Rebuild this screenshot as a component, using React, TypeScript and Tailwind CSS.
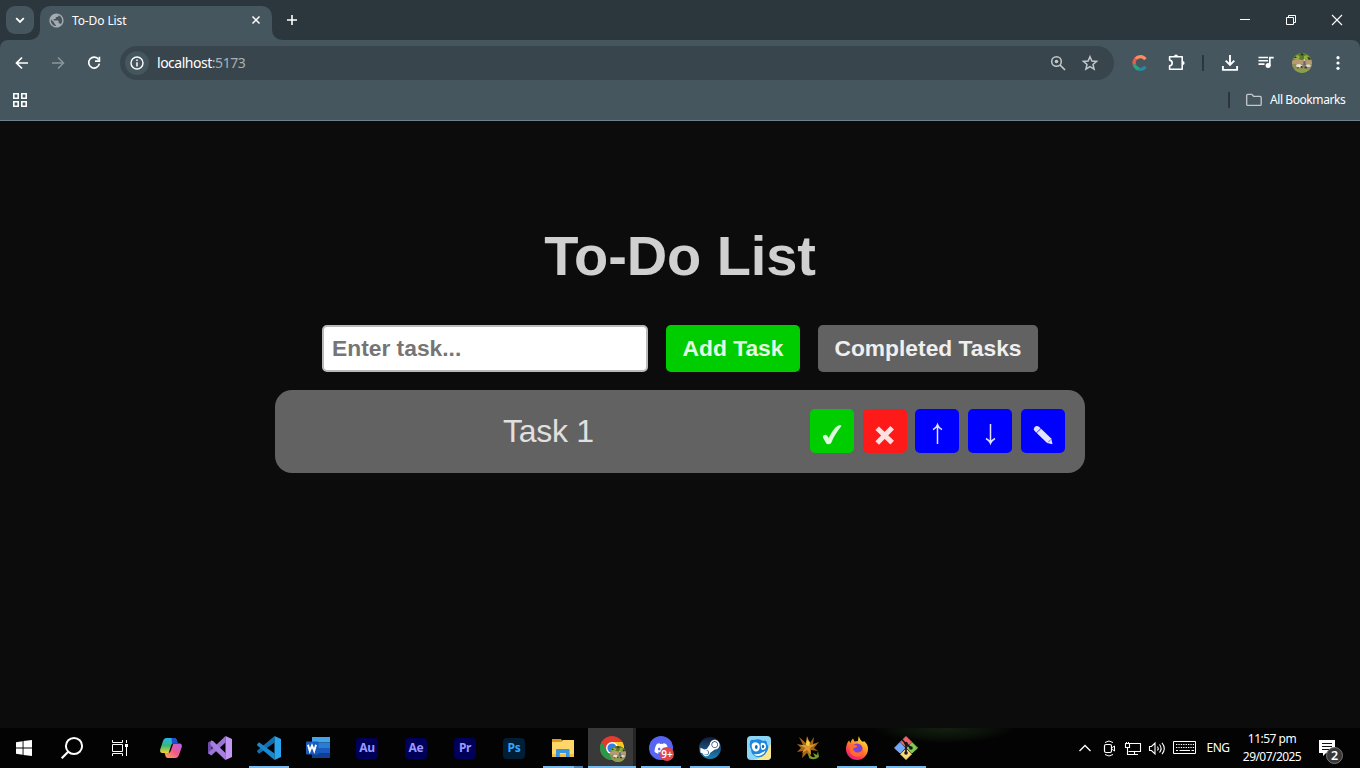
import type { ReactNode } from "react";
import { MdPublic } from "react-icons/md";
import { FaDiscord, FaSteamSymbol } from "react-icons/fa";

type IconProps = { size?: number; children: ReactNode };

function Icon({ size = 24, children }: IconProps) {
  return (
    <svg width={size} height={size} viewBox={`0 0 ${size} ${size}`} fill="none" className="shrink-0">
      {children}
    </svg>
  );
}

function Cell({ children }: { children: ReactNode }) {
  return <div className="flex h-full w-9 shrink-0 items-center justify-center">{children}</div>;
}

function TabStrip() {
  return (
    <div className="flex h-10 items-start bg-[#2c373d] text-white">
      <button className="mt-1.5 ml-1.5 flex size-7 items-center justify-center rounded-[9px] bg-[#45565f]">
        <Icon size={14}>
          <path d="M3.2 5.2 L7 9 L10.8 5.2" stroke="#fff" strokeWidth="1.8" />
        </Icon>
      </button>
      <svg width="10" height="10" className="mt-[30px] -ml-1 shrink-0">
        <path d="M10 0 V10 H0 A10 10 0 0 0 10 0Z" fill="#45565f" />
      </svg>
      <div className="mt-1.5 flex h-[34px] w-[232px] items-center rounded-t-[10px] bg-[#45565f] pr-2.5 pb-1.5 pl-2">
        <MdPublic size={17} color="#a5abb0" />
        <span className="ml-[7px] flex-1 pt-px font-['Noto_Sans','Open_Sans',sans-serif] text-[12px] tracking-[-0.12px]">
          To-Do List
        </span>
        <Icon size={12}>
          <path d="M2.5 2.5 L9.5 9.5 M9.5 2.5 L2.5 9.5" stroke="#fff" strokeWidth="1.5" />
        </Icon>
      </div>
      <svg width="10" height="10" className="mt-[30px] shrink-0">
        <path d="M0 0 V10 H10 A10 10 0 0 1 0 0Z" fill="#45565f" />
      </svg>
      <div className="mt-3.5 ml-1">
        <Icon size={12}>
          <path d="M6 1 V11 M1 6 H11" stroke="#fff" strokeWidth="1.6" />
        </Icon>
      </div>
      <div className="ml-auto flex h-10">
        <div className="flex w-[46px] items-center justify-center">
          <Icon size={12}>
            <path d="M1 5.5 H11" stroke="#fff" />
          </Icon>
        </div>
        <div className="flex w-[46px] items-center justify-center">
          <Icon size={12}>
            <path d="M1.5 3.5 H8.5 V10.5 H1.5 Z M3.5 3.5 V1.5 H10.5 V8.5 H8.5" stroke="#fff" />
          </Icon>
        </div>
        <div className="flex w-[46px] items-center justify-center">
          <Icon size={12}>
            <path d="M1 1 L11 11 M11 1 L1 11" stroke="#fff" strokeWidth="1.1" />
          </Icon>
        </div>
      </div>
    </div>
  );
}

function Photo({ size }: { size: number }) {
  return (
    <svg width={size} height={size} viewBox="0 0 20 20" className="shrink-0 rounded-full">
      <rect width="20" height="20" fill="#8d9a5c" />
      <rect width="20" height="7" fill="#5d7a2c" />
      <path d="M1 6 L3 3 L6 2 L8 4 L6 7Z M12 3 L15 2 L18 5 L16 7 L12 6Z" fill="#93ae45" />
      <path d="M8 0 L12 1 L10 3Z M15 4 L19 5 L17 7Z M3 3 L5 5 L2 5Z" fill="#243a12" />
      <path d="M0 7.5 L6 6 L12 7.5 L20 7 V11 H0Z" fill="#b99a70" />
      <path d="M0 11 H20 V16 H0Z" fill="#948a5e" />
      <path d="M4 12 Q6 10.2 9 11.5 L10.5 13 L8 14.5 L4.5 13.8Z" fill="#e9e1d4" />
      <path d="M13.5 12 Q16 10.5 19 12 L18 14 L14 14Z" fill="#ded5cb" />
      <path d="M11.4 7.6 H13.3 L14 12.5 H11.4Z" fill="#566e8c" />
      <circle cx="12.3" cy="6.9" r="1" fill="#e5c6b0" />
      <path d="M5.5 14 H6.5 V16 H5.5Z M12.5 13.5 H15 V15.5 H12.5Z M8.8 13 H10.5 V15 H8.8Z" fill="#4b3a2c" />
      <path d="M0 16 Q10 14.8 20 16 V20 H0Z" fill="#8aa048" />
    </svg>
  );
}

function Toolbar() {
  return (
    <div className="bg-[#2c373d]">
      <div className="h-[81px] rounded-t-lg border-b border-[#71808a] bg-[#45565f] text-white">
        <div className="flex h-11 items-center px-1 pt-0.5">
          <Cell>
            <Icon size={18}>
              <path d="M15 9 H4 M9 3.5 L3.5 9 L9 14.5" stroke="#fff" strokeWidth="1.7" />
            </Icon>
          </Cell>
          <Cell>
            <Icon size={18}>
              <path d="M3 9 H14 M9 3.5 L14.5 9 L9 14.5" stroke="#8b969c" strokeWidth="1.5" />
            </Icon>
          </Cell>
          <Cell>
            <Icon size={18}>
              <path d="M13.6 5.6 A5.4 5.4 0 1 0 14.4 9.7" stroke="#fff" strokeWidth="1.7" />
              <path d="M14.4 2.8 V7.2 H10" stroke="#fff" strokeWidth="1.7" />
            </Icon>
          </Cell>
          <div className="ml-2 flex h-[34px] flex-1 items-center rounded-full bg-[#39454c] pr-[15px] pl-[5px]">
            <div className="flex size-6 items-center justify-center rounded-full bg-[#45565f]">
              <Icon size={16}>
                <circle cx="8" cy="8" r="6" stroke="#fff" strokeWidth="1.4" />
                <path d="M8 7.2 V11.4 M8 4.6 V6.1" stroke="#fff" strokeWidth="1.5" />
              </Icon>
            </div>
            <span className="ml-2 flex-1 pb-px font-['Noto_Sans','Open_Sans',sans-serif] text-[14px] tracking-[-0.48px]">
              localhost<span className="text-[#a9b0b5]">:5173</span>
            </span>
            <Icon size={18}>
              <circle cx="7.5" cy="7.5" r="4.8" stroke="#c3c8cb" strokeWidth="1.5" />
              <circle cx="7.5" cy="7.5" r="1.8" fill="#c3c8cb" />
              <path d="M11 11 L16 16" stroke="#c3c8cb" strokeWidth="1.7" />
            </Icon>
            <svg width="18" height="18" viewBox="0 0 18 18" fill="none" className="ml-[14px]">
              <path
                d="M9 2.7 L10.9 7 L15.6 7.4 L12 10.5 L13.1 15.1 L9 12.7 L4.9 15.1 L6 10.5 L2.4 7.4 L7.1 7Z"
                stroke="#c3c8cb"
                strokeWidth="1.5"
              />
            </svg>
          </div>
          <div className="w-2" />
          <Cell>
            <Icon size={18}>
              <path d="M14.4 5.2 A6.2 6.2 0 0 0 4.6 4.8" stroke="#ff8b5e" strokeWidth="3.2" />
              <path d="M4.6 4.8 A6.2 6.2 0 0 0 3.3 10.5" stroke="#ef5a4a" strokeWidth="3.2" />
              <path d="M3.3 10.5 A6.2 6.2 0 0 0 8 15.1" stroke="#27a581" strokeWidth="3.2" />
              <path d="M8 15.1 A6.2 6.2 0 0 0 14.4 12.8" stroke="#238ba6" strokeWidth="3.2" />
            </Icon>
          </Cell>
          <Cell>
            <Icon size={18}>
              <path
                d="M2.6 2.8 H15.2 V15.2 H2.6 V11.9 Q5.2 11.4 5.2 9 Q5.2 6.6 2.6 6.1Z"
                stroke="#fff"
                strokeWidth="1.6"
                strokeLinejoin="round"
              />
              <path d="M7 2.4 A2 2 0 0 1 11 2.4Z M15.6 7 A2 2 0 0 1 15.6 11Z" fill="#fff" />
            </Icon>
          </Cell>
          <div className="flex w-[18px] justify-center">
            <div className="h-4 w-0.5 bg-[#2c373d]" />
          </div>
          <Cell>
            <Icon size={18}>
              <path d="M9 1 V10.5 M4.7 6.7 L9 11 L13.3 6.7" stroke="#fff" strokeWidth="1.9" />
              <path d="M1.9 12 V15.9 H16.1 V12" stroke="#fff" strokeWidth="1.9" strokeLinejoin="round" />
            </Icon>
          </Cell>
          <Cell>
            <Icon size={18}>
              <path d="M1.5 3.5 H11 M1.5 6.8 H11 M1.5 10.1 H7.5" stroke="#fff" strokeWidth="1.6" />
              <circle cx="11.1" cy="11.6" r="2.5" fill="#fff" />
              <path d="M12.8 12 V3.6 H16.7" stroke="#fff" strokeWidth="1.7" />
            </Icon>
          </Cell>
          <Cell>
            <Photo size={20} />
          </Cell>
          <Cell>
            <Icon size={18}>
              <circle cx="9" cy="3.7" r="1.6" fill="#fff" />
              <circle cx="9" cy="9" r="1.6" fill="#fff" />
              <circle cx="9" cy="14.3" r="1.6" fill="#fff" />
            </Icon>
          </Cell>
        </div>
        <div className="flex h-8 items-center pr-[14px] pl-3">
          <Icon size={16}>
            <path
              d="M1.8 1.8 H6.2 V6.2 H1.8Z M9.8 1.8 H14.2 V6.2 H9.8Z M1.8 9.8 H6.2 V14.2 H1.8Z M9.8 9.8 H14.2 V14.2 H9.8Z"
              stroke="#fff"
              strokeWidth="1.6"
            />
          </Icon>
          <div className="ml-auto h-4 w-0.5 bg-[#2c373d]" />
          <svg width="18" height="16" viewBox="0 0 18 16" fill="none" className="ml-[15px]">
            <path
              d="M1.7 3.4 Q1.7 2.4 2.7 2.4 H6.8 L8.6 4.3 H15.2 Q16.2 4.3 16.2 5.3 V12.4 Q16.2 13.4 15.2 13.4 H2.7 Q1.7 13.4 1.7 12.4Z"
              stroke="#c3c8cb"
              strokeWidth="1.3"
            />
          </svg>
          <span className="ml-[7px] w-[76px] font-['Noto_Sans','Open_Sans',sans-serif] text-[12px] tracking-[-0.42px] whitespace-nowrap">
            All Bookmarks
          </span>
        </div>
      </div>
    </div>
  );
}

function ActionButton({ color, children }: { color: string; children: ReactNode }) {
  return (
    <button className={`flex size-11 items-center justify-center rounded-[5px] ${color}`}>
      <Icon size={44}>{children}</Icon>
    </button>
  );
}

function TodoPage() {
  return (
    <main className="flex h-[607px] flex-col items-center bg-[#0c0c0c] pt-[103px] font-['Liberation_Sans',Arial,sans-serif]">
      <h1 className="text-[56px] leading-[64px] font-bold tracking-[-0.1px] text-[#d0d0d0]">To-Do List</h1>
      <div className="mt-[37px] flex gap-[18px] text-[22.8px] font-bold">
        <input
          className="h-[47px] w-[326px] rounded-[5px] border-2 border-[#bababa] bg-white px-2 placeholder:text-[#757575]"
          placeholder="Enter task..."
        />
        <button className="h-[47px] w-[134px] rounded-[5px] bg-[#00cd00] whitespace-nowrap text-[#e5fae5]">
          Add Task
        </button>
        <button className="h-[47px] w-[220px] rounded-[5px] bg-[#626262] whitespace-nowrap text-[#efefef]">
          Completed Tasks
        </button>
      </div>
      <div className="mt-[18px] flex h-[83px] w-[810px] items-start rounded-[17px] bg-[#626262] px-5 pt-[19px]">
        <span className="mr-2 flex-1 pt-0.5 text-center text-[32px] leading-10 tracking-[-0.3px] text-[#e0e0e0]">
          Task 1
        </span>
        <div className="flex gap-[8.8px]">
          <ActionButton color="bg-[#00cd00]">
            <path
              d="M12.9 28.6 C12.3 26.6 15.6 24.8 17 26.6 L18.8 29 C21.3 23.6 24.6 18.2 28 16.7 C29.4 16 32.2 16.2 31.2 17.3 C27.4 22 23.8 27.5 21.4 33.6 C20.8 35.4 17.2 35.8 16.2 34.2 Z"
              fill="#ddfadd"
            />
          </ActionButton>
          <ActionButton color="bg-[#ff1a1a]">
            <path d="M14.2 19.2 L29.2 33.6 M29.2 18.8 L14.2 34" stroke="#ffdfdf" strokeWidth="5" />
          </ActionButton>
          <ActionButton color="bg-[#0000ff]">
            <path d="M22.5 35 V16.5 M18 20.6 Q21.4 19 22.5 15.8 Q23.6 19 27 20.6" stroke="#e2e2ff" strokeWidth="1.5" />
          </ActionButton>
          <ActionButton color="bg-[#0000ff]">
            <path d="M22.5 15 V33.5 M18 29.5 Q21.4 31.2 22.5 34.3 Q23.6 31.2 27 29.5" stroke="#e2e2ff" strokeWidth="1.5" />
          </ActionButton>
          <ActionButton color="bg-[#0000ff]">
            <path d="M13.3 18.5 Q15.5 16 18 17.8 L19.7 19.3 L15.3 23.7 L13.5 21.8 Q12 20.2 13.3 18.5Z" fill="#e2e2ff" />
            <path d="M15.7 24.1 L20.1 19.7 L30.3 29.5 L31.5 35.2 L26.1 33.9Z" fill="#e2e2ff" />
            <path d="M27 33.4 L30 30.4" stroke="#3030ff" strokeWidth="0.7" />
          </ActionButton>
        </div>
      </div>
    </main>
  );
}

type TaskItemProps = { children: ReactNode; open?: boolean; active?: boolean; stacked?: boolean };

function TaskItem({ children, open, active, stacked }: TaskItemProps) {
  return (
    <div className={`mr-px flex h-10 w-12 shrink-0 flex-col items-center ${active ? "bg-[#393939]" : ""}`}>
      <div
        className={`flex h-[38px] w-full items-center justify-center pt-0.5 ${active ? "border-r-[3px] border-[#252525] pl-[3px]" : ""}`}
      >
        {children}
      </div>
      {open && (
        <div className={`flex h-0.5 justify-end bg-[#76b9ed] ${active ? "w-12" : "w-10"}`}>
          {stacked && <div className="h-0.5 w-[9px] bg-[#4d83b0]" />}
        </div>
      )}
    </div>
  );
}

function AdobeIcon({ label, tile, ink }: { label: string; tile: string; ink: string }) {
  return (
    <div
      className={`flex h-[21px] w-[22px] items-center justify-center rounded-[4px] font-['Noto_Sans','Open_Sans',sans-serif] text-[12px] leading-none font-bold tracking-[-0.3px] ${tile} ${ink}`}
    >
      {label}
    </div>
  );
}

function Taskbar() {
  return (
    <footer className="flex h-10 items-stretch overflow-hidden bg-[#030303] bg-[radial-gradient(ellipse_70px_15px_at_945px_0px,#141f10_0%,#0b1209_60%,transparent_100%)] bg-no-repeat text-white">
      <div className="flex w-12 items-center justify-center">
        <Icon size={16}>
          <path
            d="M0 2.2 L6.6 1.3 V7.5 H0Z M7.5 1.1 L16 0 V7.5 H7.5Z M0 8.4 H6.6 V14.7 L0 13.8Z M7.5 8.4 H16 V16 L7.5 14.9Z"
            fill="#fff"
          />
        </Icon>
      </div>
      <div className="flex w-12 items-center justify-center">
        <Icon size={24}>
          <circle cx="14" cy="10" r="8.1" stroke="#fff" strokeWidth="2" />
          <path d="M8.2 15.8 L1.7 22.3" stroke="#fff" strokeWidth="2.2" />
        </Icon>
      </div>
      <div className="mr-[3px] flex w-12 items-center justify-center">
        <Icon size={18}>
          <path
            d="M1.5 1 V3.5 H11.5 V1 M1.5 5.5 H11.5 V12.5 H1.5Z M1.5 17 V14.5 H11.5 V17 M15.5 1 V4 M15.5 8 V17"
            stroke="#fff"
          />
          <path d="M14 5 H17 V8 H14Z" fill="#fff" />
        </Icon>
      </div>

      <TaskItem>
        <Icon>
          <defs>
            <linearGradient id="cpA" x1="0" y1="0" x2="0" y2="1">
              <stop stopColor="#27b5ef" />
              <stop offset=".5" stopColor="#34b779" />
              <stop offset="1" stopColor="#f2d235" />
            </linearGradient>
            <linearGradient id="cpB" x1="1" y1="0" x2="0" y2="1">
              <stop stopColor="#b164ee" />
              <stop offset=".5" stopColor="#f1588b" />
              <stop offset="1" stopColor="#ffad57" />
            </linearGradient>
          </defs>
          <path d="M7.5 2 H15 Q17.3 2 18 5 L18.6 7 H15 Q13 7 12.3 9 L9.7 17 H3.5 Q.5 17 1.2 13.5 L4 5 Q5 2 7.5 2Z" fill="url(#cpA)" />
          <path d="M12.5 2 H15 Q17.3 2 18 5 L18.6 7 H15 Q13.5 7 13 8Z" fill="#1d50cf" />
          <path d="M16.5 22 H9 Q6.7 22 6.2 19 L5.6 17 H9 Q11 17 11.7 15 L14.3 7.5 H20.5 Q23.4 7.5 22.8 11 L20 19 Q19 22 16.5 22Z" fill="url(#cpB)" />
        </Icon>
      </TaskItem>
      <TaskItem>
        <Icon>
          <path d="M0 6.5 L3.4 4.5 L4.5 5.2 L17.5 18 V24 L3.6 11 V15 L0 17.5Z" fill="#714dab" />
          <path d="M0 17.2 L3.4 19.6 L17.5 6.5 V0 L5.5 11.5 L2 15Z" fill="#9a73d6" />
          <path d="M3.4 4.4 L5 5 L17.5 17 V24 L7.6 14.6 L2.2 8Z" fill="#a67fe0" />
          <path d="M17.5 0 L24 3 V21 L17.5 24Z" fill="#c496f3" />
        </Icon>
      </TaskItem>
      <TaskItem open>
        <Icon>
          <path d="M0 15.5 L2 17.8 L17.5 6.5 V0 L.3 14.5Z" fill="#126fae" />
          <path d="M0 8.5 L2 6.2 L17.5 17.5 V24 L.3 9.5Z" fill="#1689d1" />
          <path d="M17.5 0 L24 3 V21 L17.5 24Z" fill="#28a5ed" />
        </Icon>
      </TaskItem>
      <TaskItem>
        <Icon>
          <path d="M6 1 H24 V6.5 H6Z" fill="#41a5ee" />
          <path d="M6 6.5 H24 V12 H6Z" fill="#2b7cd3" />
          <path d="M6 12 H24 V17 H6Z" fill="#185abd" />
          <path d="M6 17 H24 V22 H6Z" fill="#103f91" />
          <rect y="5.5" width="12.5" height="13" rx="1" fill="#185abd" />
          <path d="M2 8.7 L3.8 15 L6 9.5 L8.2 15 L10 8.7" stroke="#fff" strokeWidth="1.9" />
        </Icon>
      </TaskItem>
      <TaskItem>
        <AdobeIcon label="Au" tile="bg-[#00005b]" ink="text-[#9999ff]" />
      </TaskItem>
      <TaskItem>
        <AdobeIcon label="Ae" tile="bg-[#00005b]" ink="text-[#9999ff]" />
      </TaskItem>
      <TaskItem>
        <AdobeIcon label="Pr" tile="bg-[#00005b]" ink="text-[#9999ff]" />
      </TaskItem>
      <TaskItem>
        <AdobeIcon label="Ps" tile="bg-[#001e36]" ink="text-[#31a8ff]" />
      </TaskItem>
      <TaskItem open stacked>
        <Icon>
          <path d="M1 3 H10 L11.5 5 V8 H1Z" fill="#e09a16" />
          <path d="M1 6 H10.5 L11.8 4 H23 V21 H1Z" fill="#ffd667" />
          <path d="M1 18 H23 V21 H1Z" fill="#f0bd46" />
          <path d="M5 14 Q5 13 6 13 H17.5 Q18.5 13 18.5 14 V21 H15 V17 H8.8 V21 H5Z" fill="#3a96dc" />
        </Icon>
      </TaskItem>
      <TaskItem open active>
        <div className="relative mr-px size-6">
          <Icon>
            <circle cx="12" cy="12" r="12" fill="#e33b2e" />
            <path d="M1.6 6 A12 12 0 0 0 11.5 24 L17.2 15 H6.8Z" fill="#249b49" />
            <path d="M11.5 24 A12 12 0 0 0 22.4 6 H12 L17.2 15Z" fill="#fdcb1f" />
            <circle cx="12" cy="12" r="6" fill="#fff" />
            <circle cx="12" cy="12" r="4.6" fill="#347ee8" />
          </Icon>
          <div className="absolute top-[10px] left-[10px]">
            <Photo size={16} />
          </div>
        </div>
      </TaskItem>
      <TaskItem open>
        <div className="relative flex size-6 items-center justify-center rounded-full bg-[#5865f2]">
          <FaDiscord size={15} />
          <div className="absolute top-[11px] left-[11px] flex size-[14px] items-center justify-center rounded-full bg-[#e0444c] font-['Noto_Sans',sans-serif] text-[10px] leading-none font-semibold">
            9+
          </div>
        </div>
      </TaskItem>
      <TaskItem open>
        <div className="flex size-[22px] items-center justify-center overflow-hidden rounded-full bg-linear-to-b from-[#111b3b] to-[#1784b8]">
          <FaSteamSymbol size={22} />
        </div>
      </TaskItem>
      <TaskItem>
        <Icon>
          <rect width="24" height="24" rx="4" fill="#8bd6f8" />
          <path d="M24 7 V20 Q24 24 20 24 H6 Q18 22 24 7Z" fill="#fbe88a" />
          <path d="M3 7 Q3 3 7 4 Q12 2 16 5 Q20 3 20 8 Q23 12 19 17 Q16 22 10 21 Q4 19 4 13 Q2 10 3 7Z" fill="#1e86dd" />
          <path d="M5 8 Q7 5 11 7 Q14 9 12 14 Q9 17 6 14 Q4 11 5 8Z M14 7 Q18 6 19 10 Q19 14 15 14 Q13 11 14 7Z" fill="#fff" />
          <path d="M6.5 18 Q12 19.5 18.5 14.5 Q17 20 11 20 Q8 20 6.5 18Z" fill="#fff" />
          <ellipse cx="9.3" cy="11" rx="1.4" ry="1.9" fill="#176bb5" />
          <ellipse cx="16" cy="10.5" rx="1.2" ry="1.7" fill="#176bb5" />
        </Icon>
      </TaskItem>
      <TaskItem>
        <Icon>
          <path
            d="M11 0 L14 7 L18 1 L17 8 L23 6 L18 12 L22 15 L15 14 L14 22 L11 17 L6 22 L7 15 L1 16 L5 12 L1 8 L7 9 L3 1 L10 7Z"
            fill="#a46617"
          />
          <path d="M11 1 L14 9 L20 8 L14 12 L15 19 L11 14 L6 17 L9 12 L4 9 L10 9Z" fill="#dc982e" />
          <path d="M11 4 L14 6 L13 10 L10 9Z" fill="#f1d33b" />
          <path d="M12 15 Q14 22 19 21 L17 17 L21 19 L22 15 L23 21 Q18 25 13 22Z" fill="#769d21" />
        </Icon>
      </TaskItem>
      <TaskItem open>
        <Icon>
          <defs>
            <linearGradient id="fox" x1=".8" y1="0" x2=".2" y2="1">
              <stop stopColor="#fff044" />
              <stop offset=".45" stopColor="#ff8b20" />
              <stop offset=".75" stopColor="#ff3750" />
              <stop offset="1" stopColor="#dc1a92" />
            </linearGradient>
          </defs>
          <path
            d="M14 0 Q14.3 3.5 18 6 L19 5 Q23 8 23 13 A11 11 0 0 1 1 13 Q1 8 4 4.5 L5.5 7 Q6 4 8 2.5 L9.5 5.5 Q12 5 13 5 Q13 2 14 0Z"
            fill="url(#fox)"
          />
          <circle cx="12" cy="13" r="5.6" fill="#7b42d7" />
          <path d="M4 9 Q7 6.5 10 9 Q14 10 11 11.5 L8 12.5 Q9 16.5 13 16.5 Q17 16 17.6 12 Q20 17 15 20 Q8 22 5 16Z" fill="#ff6a33" />
        </Icon>
      </TaskItem>
      <TaskItem open>
        <Icon>
          <path d="M12 .5 L17.5 6 L12 11 L6.5 6Z" fill="#f0646a" stroke="#f0646a" strokeLinejoin="round" />
          <path d="M6 6.5 L11.2 12 L6 17 L.5 12Z" fill="#74a8f7" stroke="#74a8f7" strokeLinejoin="round" />
          <path d="M18 6.5 L23.5 12 L18 17 L12.8 12Z" fill="#80cc52" stroke="#80cc52" strokeLinejoin="round" />
          <path d="M12 13 L17.5 18 L12 23.5 L6.5 18Z" fill="#f9dc75" stroke="#f9dc75" strokeLinejoin="round" />
          <path d="M8 3.5 L12 8 V17 M12 7.5 L17 12" stroke="#171717" strokeWidth="1.7" />
          <circle cx="12" cy="7.5" r="1.8" fill="#171717" />
          <circle cx="17" cy="12" r="1.8" fill="#171717" />
          <circle cx="12" cy="17" r="1.8" fill="#171717" />
        </Icon>
      </TaskItem>

      <div className="ml-auto flex h-10 items-center pr-[13px] font-['Noto_Sans','Open_Sans',sans-serif] text-[12px]">
        <Icon>
          <path d="M6.5 15 L12 9.5 L17.5 15" stroke="#fff" strokeWidth="1.3" />
        </Icon>
        <Icon>
          <path d="M8 6.5 Q12 3.5 16 6.5 M8 18.5 Q12 21.5 16 18.5" stroke="#fff" />
          <rect x="7.5" y="8.5" width="7" height="8" rx="1.5" stroke="#fff" strokeWidth="1.2" />
          <path d="M14.5 11.5 H15.5 L17.5 10 V15 L15.5 13.5 H14.5" stroke="#fff" />
        </Icon>
        <Icon>
          <path d="M8.5 7.5 H19.5 V15.5 H7.5 M13.5 15.5 V18.5 M9 18.5 H17" stroke="#fff" strokeWidth="1.1" />
          <path d="M4.5 7.5 H8.5 V11.5 H4.5Z M6.5 11.5 V18.5 H10" stroke="#fff" strokeWidth="1.1" />
          <path d="M5.5 6 V8 M7.5 6 V8" stroke="#fff" />
        </Icon>
        <Icon>
          <path
            d="M4.5 10.5 H6.5 L10 7 V18 L6.5 14.5 H4.5Z M12.5 10.5 Q14 12.5 12.5 14.5 M14.5 8.5 Q17.7 12.5 14.5 16.5 M17 6.8 Q21.5 12.5 17 18.2"
            stroke="#fff"
            strokeWidth="1.1"
          />
        </Icon>
        <svg width="32" height="24" viewBox="0 0 32 24" fill="none">
          <path d="M4.5 5.5 H26.5 V17.5 H4.5Z" stroke="#fff" />
          <path d="M7 8.5 H25 M7 11.5 H25" stroke="#fff" strokeDasharray="1.3 1.1" />
          <path d="M7 14.5 H9 M10.5 14.5 H21 M22.5 14.5 H25" stroke="#fff" />
        </svg>
        <span className="w-[34px] text-center tracking-[-0.5px]">ENG</span>
        <div className="w-[74px] text-center leading-[18px] whitespace-nowrap">
          <div className="tracking-[-0.5px]">11:57 pm</div>
          <div className="tracking-[-0.55px]">29/07/2025</div>
        </div>
        <svg width="38" height="40" viewBox="0 0 38 40" fill="none">
          <path d="M10 12 H26 V25 H17 L14 28 V25 H10Z" fill="#fff" />
          <path d="M13 15.5 H23 M13 18.5 H23 M13 21.5 H20" stroke="#111" />
          <circle cx="25.5" cy="27.5" r="8" fill="#383838" stroke="#777" />
          <text x="25.5" y="32" fill="#fff" fontSize="12.5" fontWeight="600" fontFamily="Noto Sans, sans-serif" textAnchor="middle">
            2
          </text>
        </svg>
      </div>
    </footer>
  );
}

export default function App() {
  return (
    <div className="h-[768px] w-[1360px] overflow-hidden bg-[#0c0c0c]">
      <TabStrip />
      <Toolbar />
      <TodoPage />
      <Taskbar />
    </div>
  );
}
